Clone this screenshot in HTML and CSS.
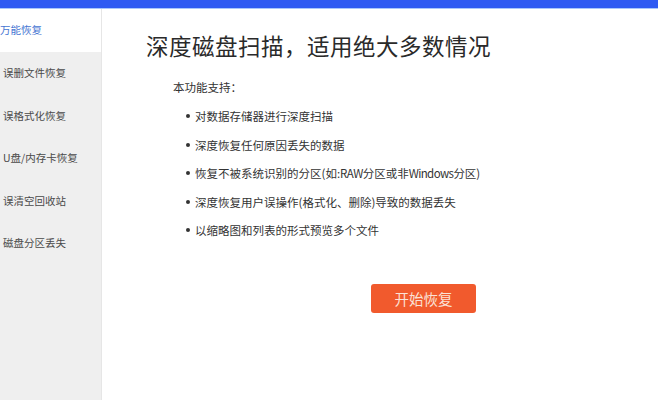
FILE: index.html
```html
<!DOCTYPE html>
<html lang="zh-CN">
<head>
    <meta charset="UTF-8">
    <title>深度磁盘扫描</title>
    <link rel="stylesheet" href="styles.css">
</head>
<body>

<div class="topbar"></div>

<div class="layout">
    <div class="sidebar">
        <div class="nav-item active">万能恢复</div>
        <div class="nav-item">误删文件恢复</div>
        <div class="nav-item">误格式化恢复</div>
        <div class="nav-item">U盘/内存卡恢复</div>
        <div class="nav-item">误清空回收站</div>
        <div class="nav-item">磁盘分区丢失</div>
    </div>

    <div class="main">
        <h1 class="title">深度磁盘扫描，适用绝大多数情况</h1>
        <p class="intro">本功能支持：</p>
        <ul class="features">
            <li>对数据存储器进行深度扫描</li>
            <li>深度恢复任何原因丢失的数据</li>
            <li>恢复不被系统识别的分区(如:<span class="latin">RAW</span>分区或非<span class="latin">Windows</span>分区)</li>
            <li>深度恢复用户误操作(格式化、删除)导致的数据丢失</li>
            <li>以缩略图和列表的形式预览多个文件</li>
        </ul>
        <div class="actions">
            <button class="start-btn">开始恢复</button>
        </div>
    </div>
</div>

</body>
</html>
```

FILE: styles.css
```css
body {
    margin: 0;
    font-family: "Noto Sans CJK SC", "Liberation Sans", sans-serif;
    background: #fff;
    height: 400px;
    display: flex;
    flex-direction: column;
    overflow: hidden;
}

.topbar {
    height: 8px;
    background: #2e5af2;
    border-bottom: 1px solid #a9c6fb;
    flex-shrink: 0;
}

.layout {
    display: flex;
    flex: 1;
}

/* 左侧菜单 */
.sidebar {
    width: 101px;
    background: #efefef;
    border-right: 1px solid #e6e6e6;
}

.nav-item {
    height: 42.5px;
    display: flex;
    align-items: center;
    padding-left: 3px;
    font-size: 10.5px;
    color: #4a4a4a;
}

.nav-item.active {
    background: #fff;
    color: #4675d2;
    padding-left: 0;
    padding-bottom: 1px;
    box-sizing: border-box;
}

/* 右侧内容 */
.main {
    flex: 1;
    padding-left: 44px;
}

.title {
    margin: 21px 0 0;
    font-size: 22.5px;
    font-weight: normal;
    color: #2a2a2a;
    line-height: 31px;
    letter-spacing: 0.5px;
}

.intro {
    margin: 18px 0 0 27px;
    font-size: 11.5px;
    color: #333;
    line-height: 16px;
}

.features {
    margin: 13px 0 0 49px;
    padding: 0;
    list-style: none;
}

.features li {
    position: relative;
    font-size: 11.5px;
    color: #333;
    height: 28.5px;
    line-height: 16px;
}

.features li::before {
    content: "";
    position: absolute;
    left: -9px;
    top: 6px;
    width: 4px;
    height: 4px;
    border-radius: 50%;
    background: #333;
}

.latin {
    letter-spacing: -0.6px;
}

.actions {
    margin: 33px 0 0 225px;
}

.start-btn {
    width: 105px;
    height: 29px;
    border: none;
    border-radius: 3px;
    background: #f15a2d;
    color: #fbe1d6;
    font-family: inherit;
    font-size: 14.5px;
    padding: 0;
}
```
